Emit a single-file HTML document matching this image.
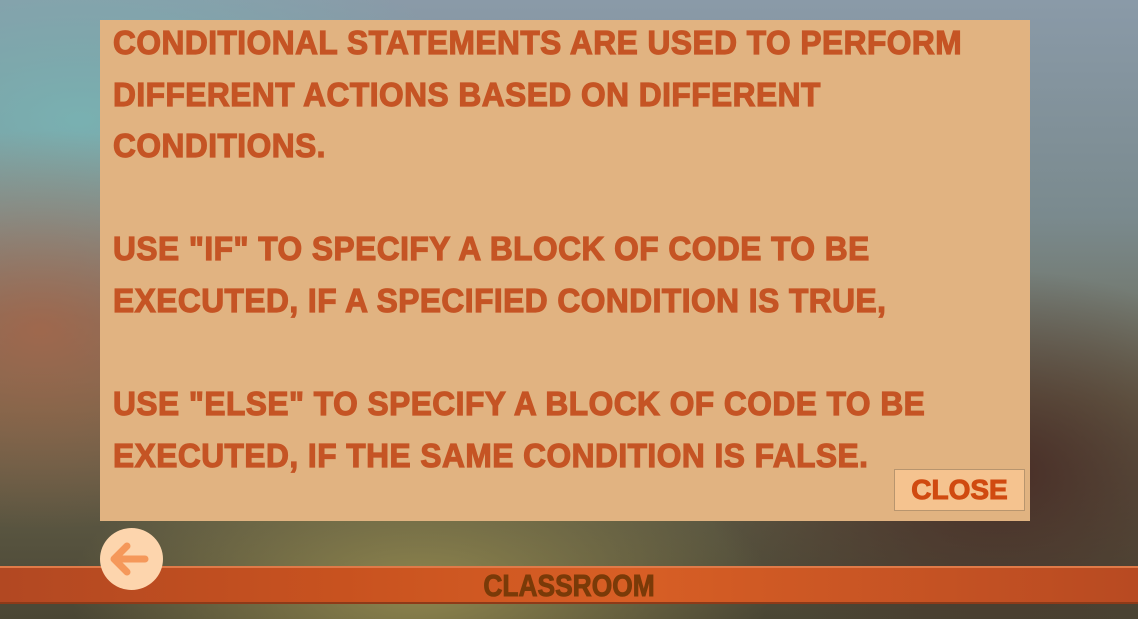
<!DOCTYPE html>
<html><head><style>
body{margin:0;width:1138px;height:619px;overflow:hidden;position:relative;font-family:"Liberation Sans",sans-serif;
background:
radial-gradient(ellipse 300px 200px at 40px 330px,rgba(170,100,70,.8),transparent),
radial-gradient(ellipse 350px 150px at 420px 590px,rgba(150,140,80,.9),transparent),
radial-gradient(ellipse 300px 200px at 1000px 470px,rgba(70,40,35,.9),transparent),
radial-gradient(ellipse 400px 200px at 80px 120px,rgba(120,180,180,.9),transparent),
linear-gradient(180deg,#8a9aa8 0%,#7a8a8e 35%,#6c6850 65%,#4a4634 100%);}
.panel{position:absolute;left:100px;top:20px;width:930px;height:501px;background:#e1b381;}
.t{position:absolute;left:113px;color:#c55424;font-weight:bold;font-size:33px;white-space:nowrap;transform-origin:0 0;letter-spacing:0.5px;transform:scaleX(0.96);-webkit-text-stroke:1.2px #c55424}
.close{position:absolute;left:894px;top:469px;width:129px;height:40px;background:#f5c38f;border:1px solid #b8956e;color:#d04a10;font-weight:bold;font-size:28px;text-align:center;line-height:40px;-webkit-text-stroke:1px #d04a10}
.back{position:absolute;left:100px;top:528px;width:63px;height:62px;border-radius:50%;background:#fdd5ad;z-index:2}
.plank{position:absolute;left:0;top:566px;width:1138px;height:38px;background:linear-gradient(90deg,#b24822,#c8521f 30%,#d85f25 55%,#b84a22 100%);border-top:2px solid #e07a48;border-bottom:2px solid #8e3a18;box-sizing:border-box}
.plank span{position:absolute;left:0;right:0;text-align:center;top:0px;font-weight:bold;font-size:31px;color:#7a3a08;transform:scaleX(0.85);-webkit-text-stroke:1px #7a3a08}
</style></head><body>
<div class="panel"></div>
<div class="t" style="top:24px">CONDITIONAL STATEMENTS ARE USED TO PERFORM</div>
<div class="t" style="top:76px">DIFFERENT ACTIONS BASED ON DIFFERENT</div>
<div class="t" style="top:127px">CONDITIONS.</div>
<div class="t" style="top:230px">USE "IF" TO SPECIFY A BLOCK OF CODE TO BE</div>
<div class="t" style="top:282px">EXECUTED, IF A SPECIFIED CONDITION IS TRUE,</div>
<div class="t" style="top:385px">USE "ELSE" TO SPECIFY A BLOCK OF CODE TO BE</div>
<div class="t" style="top:437px">EXECUTED, IF THE SAME CONDITION IS FALSE.</div>
<div class="close">CLOSE</div>
<div class="plank"><span>CLASSROOM</span></div>
<div class="back"><svg width="63" height="62" viewBox="0 0 63 62"><path d="M45 31H14M27 18L14 31L27 44" stroke="#f5985a" stroke-width="7" stroke-linecap="round" stroke-linejoin="round" fill="none"/></svg></div>
</body></html>
